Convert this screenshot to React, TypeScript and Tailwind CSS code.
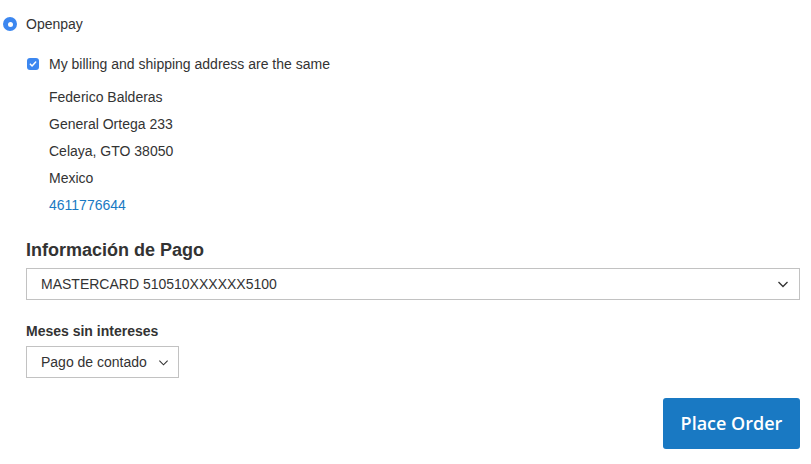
export default function App() {
  return (
    <div className="w-[811px] h-[464px] bg-white text-[#333] text-[14px] overflow-hidden" style={{ fontFamily: '"Liberation Sans", Arial, sans-serif' }}>
      <div className="pl-[3px] pt-[17px] pr-[11px]">
        <label className="flex items-center h-[14px] gap-[9px]">
          <span className="w-[14px] h-[14px] rounded-full bg-[#3c87f0] flex items-center justify-center">
            <span className="w-[5px] h-[5px] rounded-full bg-white" />
          </span>
          <span>Openpay</span>
        </label>

        <div className="pl-[24px] mt-[26px]">
          <label className="flex items-center gap-[10px] h-[14px]">
            <span className="w-[12px] h-[12px] rounded-[3px] bg-[#3c87f0] flex items-center justify-center">
              <svg viewBox="0 0 12 12" className="w-[10px] h-[10px]" fill="none" stroke="white" strokeWidth={1.8} strokeLinecap="round" strokeLinejoin="round">
                <path d="M2.8 6.2l2.1 2.1 4.3-4.6" />
              </svg>
            </span>
            <span>My billing and shipping address are the same</span>
          </label>
          <div className="pl-[22px] mt-[13px] leading-[27px]">
            <div>Federico Balderas</div>
            <div>General Ortega 233</div>
            <div>Celaya, GTO 38050</div>
            <div>Mexico</div>
            <div className="text-[#1979c3]">4611776644</div>
          </div>
        </div>

        <div className="pl-[23px]">
          <h2 className="mt-[20px] text-[18px] font-bold leading-[22px]">Información de Pago</h2>
          <div className="mt-[7px] h-[32px] border border-[#c2c2c2] flex items-center justify-between pl-[14px] pr-[10px]">
            <span>MASTERCARD 510510XXXXXX5100</span>
            <svg viewBox="0 0 12 12" className="w-[12px] h-[12px]" fill="none" stroke="#333" strokeWidth={1.3}>
              <path d="M1.5 4l4.5 4.5 4.5-4.5" />
            </svg>
          </div>

          <div className="mt-[23px] font-bold leading-[16px]">Meses sin intereses</div>
          <div className="mt-[7px] w-[153px] h-[32px] border border-[#c2c2c2] flex items-center justify-between pl-[14px] pr-[9px]">
            <span>Pago de contado</span>
            <svg viewBox="0 0 12 12" className="w-[11px] h-[11px]" fill="none" stroke="#333" strokeWidth={1.2}>
              <path d="M1.5 4l4.5 4.5 4.5-4.5" />
            </svg>
          </div>

          <div className="flex justify-end mt-[20px]">
            <button className="w-[137px] h-[51px] bg-[#1979c3] text-white rounded-[3px] text-[18px] font-semibold" style={{ fontFamily: '"Open Sans", sans-serif' }}>
              Place Order
            </button>
          </div>
        </div>
      </div>
    </div>
  )
}
